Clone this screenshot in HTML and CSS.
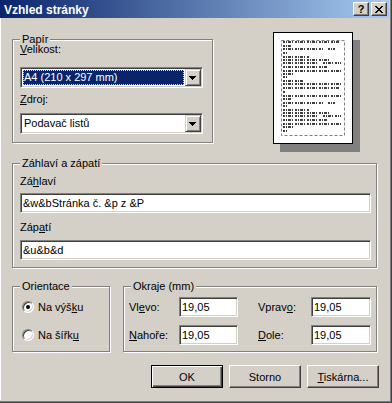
FILE: index.html
```html
<!DOCTYPE html>
<html lang="cs">
<head>
  <meta charset="UTF-8">
  <title>Vzhled stránky</title>
  <link rel="stylesheet" href="styles.css">
</head>
<body>
  <div class="window">
    <div class="titlebar">
      <span class="title">Vzhled stránky</span>
      <div class="caption-buttons">
        <span class="cap-btn help">?</span>
        <span class="cap-btn close">
          <svg width="8" height="7" viewBox="0 0 8 7">
            <path d="M0 0h2v1H0zM6 0h2v1H6zM1 1h2v1H1zM5 1h2v1H5zM2 2h4v1H2zM3 3h2v1H3zM2 4h4v1H2zM1 5h2v1H1zM5 5h2v1H5zM0 6h2v1H0zM6 6h2v1H6z" fill="#000"/>
          </svg>
        </span>
      </div>
    </div>

    <div class="content">
      <div class="top-row">
        <div class="group paper-group">
          <span class="group-title">Papír</span>
          <span class="field-label"><u>V</u>elikost:</span>
          <div class="combo combo-first">
            <span class="combo-value selected">A4 (210 x 297 mm)</span>
            <span class="combo-btn">
              <svg width="16" height="17" viewBox="0 0 16 17"><path d="M4 7h7v1H4zM5 8h5v1H5zM6 9h3v1H6zM7 10h1v1H7z" fill="#000"/></svg>
            </span>
          </div>
          <span class="field-label label-next"><u>Z</u>droj:</span>
          <div class="combo combo-second">
            <span class="combo-value">Podavač listů</span>
            <span class="combo-btn">
              <svg width="16" height="17" viewBox="0 0 16 17"><path d="M4 7h7v1H4zM5 8h5v1H5zM6 9h3v1H6zM7 10h1v1H7z" fill="#000"/></svg>
            </span>
          </div>
        </div>

        <svg class="preview" width="87" height="120" viewBox="0 0 87 120">
          <rect x="7" y="8" width="80" height="112" fill="#808080"/>
          <rect x="0.5" y="0.5" width="79" height="111" fill="#fff" stroke="#000"/>
          <rect x="8.5" y="8.5" width="63" height="95" fill="none" stroke="#808080" stroke-dasharray="3 2"/>
          <path d="M10 10H67M10 14H18M10 17H50M55 17H62M10 21H14M10 25H37M10 28H56M10 31H45M50 31H68M10 35H54M10 39H68M10 42H22M10 45H14M10 49H30M10 52H68M10 56H66M10 60H12M10 64H68M10 67H18M10 71H50M55 71H62M10 74H14M10 78H37M10 81H56M10 84H45M50 84H68M10 88H54M10 92H68M10 95H22M10 99H14"
                stroke="#000" stroke-width="1.5" stroke-dasharray="2 1 1 1 3 1 1 2"/>
        </svg>
      </div>

      <div class="group hf-group">
        <span class="group-title">Záhlaví a zápatí</span>
        <span class="field-label">Zá<u>h</u>laví</span>
        <div class="edit edit-wide edit-first">&amp;w&amp;bStránka č. &amp;p z &amp;P</div>
        <span class="field-label label-footer">Záp<u>a</u>tí</span>
        <div class="edit edit-wide edit-second">&amp;u&amp;b&amp;d</div>
      </div>

      <div class="bottom-row">
        <div class="group orient-group">
          <span class="group-title">Orientace</span>
          <div class="radio-row">
            <span class="radio checked"></span>
            <span>Na výš<u>k</u>u</span>
          </div>
          <div class="radio-row">
            <span class="radio"></span>
            <span>Na šířk<u>u</u></span>
          </div>
        </div>

        <div class="group margins-group">
          <span class="group-title">Okraje (mm)</span>
          <div class="margins-grid">
            <span>Vl<u>e</u>vo:</span>
            <div class="edit">19,05</div>
            <span class="right-label">Vprav<u>o</u>:</span>
            <div class="edit">19,05</div>
            <span><u>N</u>ahoře:</span>
            <div class="edit">19,05</div>
            <span class="right-label"><u>D</u>ole:</span>
            <div class="edit">19,05</div>
          </div>
        </div>
      </div>

      <div class="buttons">
        <button class="btn default">OK</button>
        <button class="btn">Storno</button>
        <button class="btn"><u>T</u>iskárna...</button>
      </div>
    </div>
  </div>
</body>
</html>
```

FILE: styles.css
```css
body {
  margin: 0;
  font-family: 'Liberation Sans', Arial, sans-serif;
  font-size: 11px;
  color: #000;
}
u {
  text-decoration-thickness: 1px;
  text-underline-offset: 1px;
}
.window {
  width: 392px;
  height: 403px;
  box-sizing: border-box;
  background: #d4d0c8;
  padding: 0 3px 3px 0;
  box-shadow: inset -1px -1px #404040, inset -2px -2px #808080;
}
.titlebar {
  height: 18px;
  display: flex;
  justify-content: space-between;
  padding: 0 2px 0 4px;
  background: linear-gradient(to right, #0a246a, #a6caf0);
}
.title {
  color: #fff;
  font-weight: bold;
  font-size: 12px;
  line-height: 14px;
  padding-top: 3px;
}
.caption-buttons {
  display: flex;
  gap: 2px;
  padding-top: 2px;
}
.cap-btn {
  width: 16px;
  height: 14px;
  box-sizing: border-box;
  background: #d4d0c8;
  border: 1px solid;
  border-color: #fff #404040 #404040 #fff;
  box-shadow: inset -1px -1px #808080;
  display: flex;
  align-items: center;
  justify-content: center;
}
.help {
  font-weight: bold;
  font-size: 11px;
  line-height: 11px;
}
.content {
  padding: 14px 12px 0 12px;
  box-shadow: inset 1px 0 #fff;
  height: 382px;
  box-sizing: border-box;
}
.top-row {
  display: flex;
  align-items: flex-start;
}
.group {
  position: relative;
  box-sizing: border-box;
  border: 1px solid #808080;
  box-shadow: inset 1px 1px #fff, 1px 1px #fff;
}
.group-title {
  position: absolute;
  top: -6px;
  left: 7px;
  padding: 0 2px;
  line-height: 10px;
  background: #d4d0c8;
}
.field-label {
  display: block;
  line-height: 11px;
}
.paper-group {
  width: 201px;
  height: 104px;
  margin-top: 7px;
  padding: 4px 7px 0;
}
.combo {
  width: 183px;
  height: 21px;
  box-sizing: border-box;
  display: flex;
  padding: 1px;
  background: #fff;
  border: 1px solid;
  border-color: #808080 #fff #fff #808080;
  box-shadow: inset 1px 1px #404040, inset -1px -1px #d4d0c8;
}
.combo-first {
  margin-top: 12px;
}
.label-next {
  margin-top: 6px;
}
.combo-second {
  margin-top: 8px;
}
.combo-value {
  flex: 1;
  margin: 1px;
  padding-left: 1px;
  line-height: 15px;
  white-space: nowrap;
}
.combo-value.selected {
  background: #0a246a;
  color: #fff;
  outline: 1px dotted #e0d8a0;
  outline-offset: -1px;
}
.combo-btn {
  width: 16px;
  height: 17px;
  box-sizing: border-box;
  background: #d4d0c8;
  border: 1px solid;
  border-color: #d4d0c8 #404040 #404040 #d4d0c8;
  box-shadow: inset 1px 1px #fff, inset -1px -1px #808080;
  position: relative;
}
.combo-btn svg {
  position: absolute;
  left: -1px;
  top: -1px;
}
.preview {
  display: block;
  margin-left: 60px;
}
.hf-group {
  margin-top: 11px;
  height: 105px;
  padding: 12px 7px 0;
}
.edit {
  height: 20px;
  box-sizing: border-box;
  background: #fff;
  border: 1px solid;
  border-color: #808080 #fff #fff #808080;
  box-shadow: inset 1px 1px #404040, inset -1px -1px #d4d0c8;
  padding: 1px 2px;
  line-height: 16px;
  white-space: nowrap;
}
.edit-wide {
  width: 351px;
}
.edit-first {
  margin-top: 6px;
}
.label-footer {
  margin-top: 9px;
}
.edit-second {
  margin-top: 7px;
}
.bottom-row {
  display: flex;
  gap: 13px;
  margin-top: 18px;
}
.orient-group {
  width: 98px;
  height: 66px;
  padding: 10px 0 0 9px;
}
.radio-row {
  display: flex;
  align-items: center;
  gap: 4px;
  height: 20px;
}
.radio-row + .radio-row {
  margin-top: 8px;
}
.radio {
  width: 12px;
  height: 12px;
  box-sizing: border-box;
  border-radius: 50%;
  background: #fff;
  border: 1px solid;
  border-color: #808080 #fff #fff #808080;
  box-shadow: inset 1px 1px #404040, inset -1px -1px #d4d0c8;
  position: relative;
}
.radio.checked::after {
  content: "";
  position: absolute;
  left: 3px;
  top: 3px;
  width: 4px;
  height: 4px;
  border-radius: 50%;
  background: #000;
}
.margins-group {
  width: 254px;
  height: 66px;
  padding: 10px 5px 0;
}
.margins-grid {
  display: grid;
  grid-template-columns: 50px 59px 73px 60px;
  grid-auto-rows: 20px;
  row-gap: 8px;
  align-items: center;
}
.right-label {
  padding-left: 20px;
}
.buttons {
  display: flex;
  justify-content: flex-end;
  gap: 6px;
  margin-top: 13px;
  margin-right: -2px;
}
.btn {
  width: 72px;
  height: 23px;
  box-sizing: border-box;
  padding: 0;
  font-family: inherit;
  font-size: 11px;
  color: #000;
  background: #d4d0c8;
  border: 1px solid;
  border-color: #fff #404040 #404040 #fff;
  box-shadow: inset -1px -1px #808080;
}
.btn.default {
  border-color: #000;
  box-shadow: inset 1px 1px #fff, inset -1px -1px #404040, inset -2px -2px #808080;
}
```
